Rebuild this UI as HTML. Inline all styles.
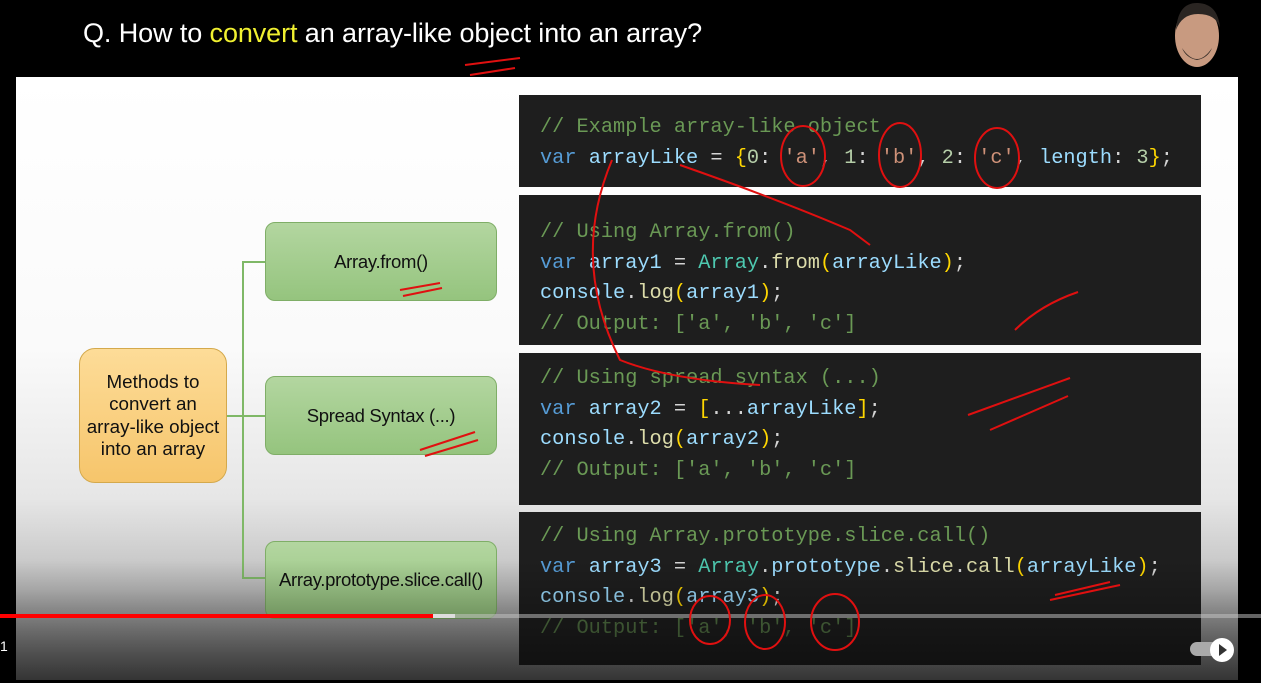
<!DOCTYPE html>
<html><head><meta charset="utf-8"><style>
*{margin:0;padding:0;box-sizing:border-box}
body{width:1261px;height:683px;background:#000;position:relative;overflow:hidden;font-family:"Liberation Sans",sans-serif}
.title{position:absolute;left:83px;top:18px;color:#fff;font-size:27px;white-space:nowrap;letter-spacing:-0.1px}
.title span{color:#f0f030}
.slide{position:absolute;left:16px;top:77px;width:1222px;height:603px;background:linear-gradient(#fff 0%,#fafafa 45%,#e6e6e6 70%,#bdbdbd 85%,#6a6a6a 100%)}
.code{position:absolute;left:519px;width:682px;background:#1e1e1e;font-family:"Liberation Mono",monospace;font-size:20.3px;color:#d4d4d4;padding-left:21px;white-space:pre;line-height:30.7px}
.c{color:#6a9955}.k{color:#569cd6}.v{color:#9cdcfe}.t{color:#4ec9b0}.s{color:#ce9178}.n{color:#b5cea8}.y{color:#ffd700}.f{color:#dcdcaa}
.g{position:absolute;left:265px;width:232px;background:linear-gradient(#b3d6a0,#95c47e);border:1px solid #7fae67;border-radius:10px;display:flex;align-items:center;justify-content:center;font-size:18.5px;letter-spacing:-0.3px;color:#111}
.o{position:absolute;left:79px;top:348px;width:148px;height:135px;background:linear-gradient(#fddc98,#f6c56b);border:1px solid #d4a94c;border-radius:16px;display:flex;align-items:center;justify-content:center;text-align:center;font-size:18.8px;line-height:22.5px;color:#111}
.ln{position:absolute;background:#7fb867}
</style></head><body>
<div class="title">Q. How to <span>convert</span> an array-like object into an array?</div>
<svg style="position:absolute;left:1168px;top:0" width="60" height="72"><ellipse cx="29" cy="36" rx="22" ry="31" fill="#c89a80"/><path d="M8 30 Q10 2 30 3 Q50 4 52 28 Q48 14 30 14 Q14 14 8 30Z" fill="#2a2522"/><path d="M14 48 Q29 70 44 48 Q40 58 29 60 Q18 58 14 48Z" fill="#3a302a"/></svg>
<div class="slide"></div>
<div class="ln" style="left:227px;top:415px;width:38px;height:2px"></div>
<div class="ln" style="left:242px;top:262px;width:2px;height:317px"></div>
<div class="ln" style="left:242px;top:261px;width:23px;height:2px"></div>
<div class="ln" style="left:242px;top:577px;width:23px;height:2px"></div>
<div class="o">Methods to<br>convert an<br>array-like object<br>into an array</div>
<div class="g" style="top:222px;height:79px">Array.from()</div>
<div class="g" style="top:376px;height:79px">Spread Syntax (...)</div>
<div class="g" style="top:541px;height:78px">Array.prototype.slice.call()</div>
<div class="code" style="top:95px;height:92px;padding-top:18px"><span class="c">// Example array-like object</span>
<span class="k">var</span> <span class="v">arrayLike</span> = <span class="y">{</span><span class="n">0</span>: <span class="s">'a'</span>, <span class="n">1</span>: <span class="s">'b'</span>, <span class="n">2</span>: <span class="s">'c'</span>, <span class="v">length</span>: <span class="n">3</span><span class="y">}</span>;</div>
<div class="code" style="top:195px;height:150px;padding-top:23px"><span class="c">// Using Array.from()</span>
<span class="k">var</span> <span class="v">array1</span> = <span class="t">Array</span>.<span class="f">from</span><span class="y">(</span><span class="v">arrayLike</span><span class="y">)</span>;
<span class="v">console</span>.<span class="f">log</span><span class="y">(</span><span class="v">array1</span><span class="y">)</span>;
<span class="c">// Output: ['a', 'b', 'c']</span></div>
<div class="code" style="top:353px;height:152px;padding-top:11px"><span class="c">// Using spread syntax (...)</span>
<span class="k">var</span> <span class="v">array2</span> = <span class="y">[</span>...<span class="v">arrayLike</span><span class="y">]</span>;
<span class="v">console</span>.<span class="f">log</span><span class="y">(</span><span class="v">array2</span><span class="y">)</span>;
<span class="c">// Output: ['a', 'b', 'c']</span></div>
<div class="code" style="top:512px;height:153px;padding-top:10px"><span class="c">// Using Array.prototype.slice.call()</span>
<span class="k">var</span> <span class="v">array3</span> = <span class="t">Array</span>.<span class="v">prototype</span>.<span class="f">slice</span>.<span class="f">call</span><span class="y">(</span><span class="v">arrayLike</span><span class="y">)</span>;
<span class="v">console</span>.<span class="f">log</span><span class="y">(</span><span class="v">array3</span><span class="y">)</span>;
<span class="c" style="opacity:.7">// Output: ['a', 'b', 'c']</span></div>
<div style="position:absolute;left:0;top:560px;width:1261px;height:120px;background:linear-gradient(rgba(0,0,0,0),rgba(0,0,0,.5))"></div>
<div style="position:absolute;left:0;top:614px;width:1261px;height:4px;background:rgba(200,200,200,.5)"></div>
<div style="position:absolute;left:433px;top:614px;width:22px;height:4px;background:#ddd"></div>
<div style="position:absolute;left:0;top:614px;width:433px;height:4px;background:#f00"></div>
<div style="position:absolute;left:1190px;top:642px;width:30px;height:14px;border-radius:7px;background:#aaa"></div>
<div style="position:absolute;left:1210px;top:638px;width:24px;height:24px;border-radius:12px;background:#fff"></div>
<div style="position:absolute;left:1219px;top:644px;width:0;height:0;border-left:8px solid #333;border-top:6px solid transparent;border-bottom:6px solid transparent"></div>
<div style="position:absolute;left:0;top:638px;color:#fff;font-size:14px">1</div>
<div style="position:absolute;left:0;top:680px;width:1261px;height:3px;background:#000"></div>
<svg style="position:absolute;left:0;top:0" width="1261" height="683" fill="none" stroke="#e01010" stroke-width="2">
<ellipse cx="803" cy="156" rx="22" ry="30"/><ellipse cx="900" cy="155" rx="21" ry="32"/><ellipse cx="997" cy="158" rx="22" ry="30"/>
<path d="M612 160 Q570 260 620 360 Q670 380 760 385"/><path d="M680 165 Q780 200 850 230 L870 245"/>
<path d="M1015 330 Q1040 305 1078 292"/><path d="M968 415 L1070 378"/><path d="M990 430 L1068 396"/>
<ellipse cx="710" cy="620" rx="20" ry="24"/><ellipse cx="765" cy="622" rx="20" ry="27"/><ellipse cx="835" cy="622" rx="24" ry="28"/>
<path d="M400 290 L440 283 M403 296 L442 288"/><path d="M420 450 L475 432 M425 456 L478 440"/>
<path d="M1050 600 L1120 585 M1055 595 L1110 582"/><path d="M465 65 L520 58 M470 75 L515 68"/>
</svg>
</body></html>
